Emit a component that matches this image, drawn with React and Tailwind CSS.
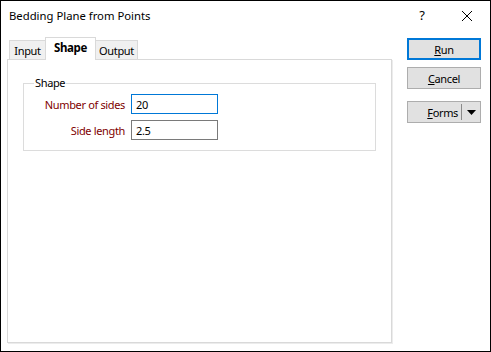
export default function App() {
  const font = { fontFamily: '"Noto Sans", "Open Sans", sans-serif' };
  return (
    <div
      className="w-[491px] h-[352px] border border-black bg-white relative overflow-hidden text-[11px] tracking-[-0.35px] text-black"
      style={font}
    >
      {/* Title bar */}
      <div className="h-[30px] flex items-center tracking-normal">
        <span className="pl-[8px] leading-none text-[11.3px]">
          Bedding Plane from Points
        </span>
        <span className="ml-auto w-[20px] text-center text-[13px]">?</span>
        <span className="w-[46px] ml-[12px] flex items-center justify-center">
          <svg width="12" height="12" viewBox="0 0 12 12">
            <path d="M1 1 L11 11 M11 1 L1 11" stroke="#000" strokeWidth="1" />
          </svg>
        </span>
      </div>

      {/* Body */}
      <div className="flex pl-[6px] pt-[6px]">
        {/* Left column */}
        <div className="w-[385px]">
          <div className="h-[23px] flex items-end pl-[2px] relative z-10 -mb-px">
            <div className="h-[19px] mb-px w-[37px] bg-[#f0f0f0] border border-b-0 border-[#d9d9d9] flex items-center justify-center leading-none">
              Input
            </div>
            <div className="h-[23px] w-[51px] -ml-px bg-white border border-b-0 border-[#d9d9d9] flex items-center justify-center font-bold leading-none pb-[2px] text-[11.5px]">
              Shape
            </div>
            <div className="h-[19px] mb-px w-[43px] -ml-px bg-[#f0f0f0] border border-b-0 border-[#d9d9d9] flex items-center justify-center leading-none">
              Output
            </div>
          </div>
          <div className="h-[284px] border border-[#d9d9d9] bg-white shadow-[1px_1px_0_#ececec] pt-[23px] pl-[15px]">
            <div className="relative w-[353px] h-[68px] border border-[#dcdcdc] pt-[10px]">
              <span className="absolute left-[10px] -top-[9px] bg-white px-[1px] leading-[16px]">
                Shape
              </span>
              <div className="flex items-center h-[20px]">
                <span className="w-[101px] text-right text-[#800000] leading-none">Number of sides</span>
                <div className="ml-[6px] w-[87px] h-[20px] border border-[#0078d7] flex items-center pl-[4px] leading-none">
                  20
                </div>
              </div>
              <div className="flex items-center h-[20px] mt-[6px]">
                <span className="w-[101px] text-right text-[#800000] leading-none">Side length</span>
                <div className="ml-[6px] w-[87px] h-[20px] border border-[#7a7a7a] flex items-center pl-[4px] leading-none">
                  2.5
                </div>
              </div>
            </div>
          </div>
        </div>

        {/* Right column buttons */}
        <div className="ml-[15px] pt-[1px] flex flex-col w-[74px]">
          <div className="h-[22px] border-2 border-[#0078d7] bg-[#e1e1e1] flex items-center justify-center leading-none">
            <span><u>R</u>un</span>
          </div>
          <div className="h-[22px] mt-[7px] border border-[#adadad] bg-[#e1e1e1] flex items-center justify-center leading-none">
            <span><u>C</u>ancel</span>
          </div>
          <div className="h-[22px] mt-[12px] border border-[#adadad] bg-[#e1e1e1] flex items-center leading-none">
            <span className="flex-1 text-right pr-[3px]"><u>F</u>orms</span>
            <span className="w-px h-[16px] bg-[#8a8a8a]"></span>
            <span className="w-[18px] flex items-center justify-center">
              <svg width="9" height="5" viewBox="0 0 9 5">
                <path d="M0 0 L9 0 L4.5 5 Z" fill="#000" />
              </svg>
            </span>
          </div>
        </div>
      </div>
    </div>
  );
}
